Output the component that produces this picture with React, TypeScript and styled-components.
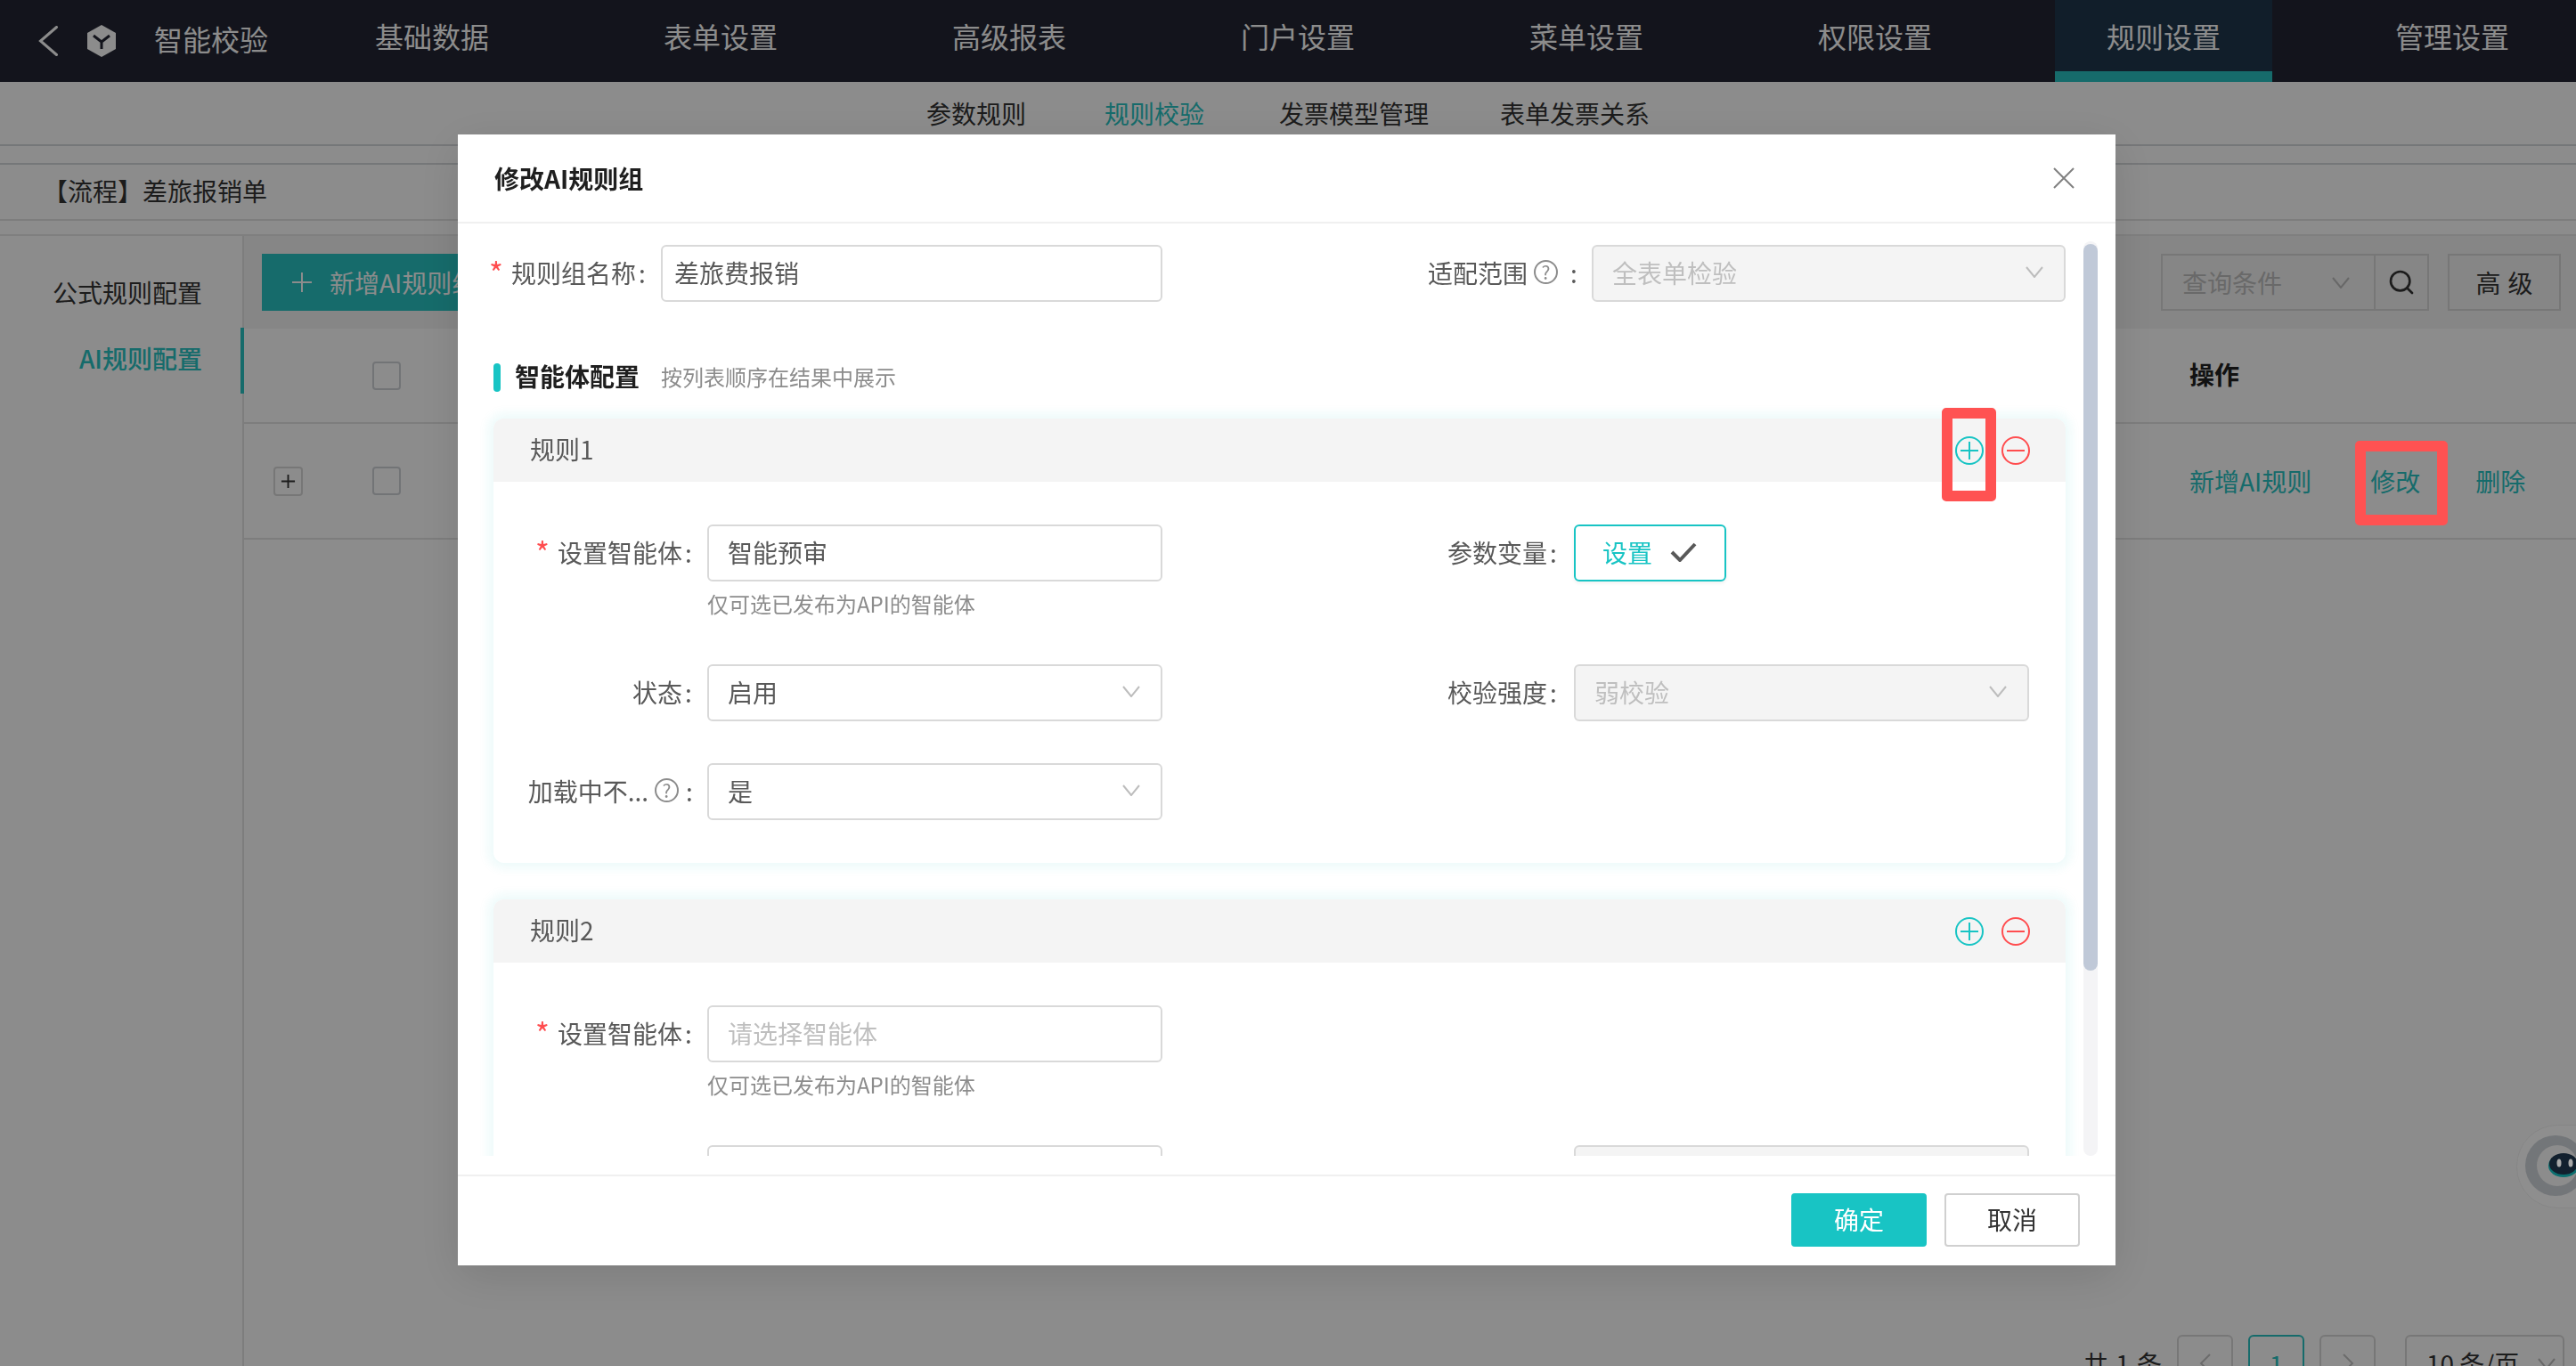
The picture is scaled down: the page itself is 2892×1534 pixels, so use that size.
import { Search } from "lucide-react";
import styled, { createGlobalStyle } from "styled-components";

const GlobalStyle = createGlobalStyle`
  * {
    box-sizing: border-box;
  }

  body {
    margin: 0;
    background: #fff;
    font-family: "Noto Sans CJK SC", "Noto Sans", sans-serif;
    font-size: 28px;
    color: #595959;
  }
`;

const Page = styled.div`
  width: 2892px;
  height: 1534px;
  overflow: hidden;
  background: #fff;
`;

const TopNav = styled.nav`
  height: 92px;
  display: flex;
  align-items: stretch;
  background: #232633;
  color: #fff;
  font-size: 32px;
`;

const Brand = styled.div`
  width: 363px;
  padding-left: 42px;
  display: flex;
  align-items: center;
`;

const BackIcon = styled.svg`
  width: 24px;
  height: 34px;
  fill: none;
  stroke: #fff;
  stroke-width: 3;
  stroke-linecap: round;
`;

const BrandLogo = styled.svg`
  width: 32px;
  height: 36px;
  margin-left: 32px;
`;

const BrandName = styled.span`
  margin-left: 43px;
  padding-bottom: 7px;
`;

const NavItems = styled.div`
  display: flex;
  gap: 80px;
`;

const NavItem = styled.div<{ $active?: boolean }>`
  width: 244px;
  display: flex;
  align-items: center;
  justify-content: center;
  background: ${props => (props.$active ? "#20384e" : "transparent")};
  border-bottom: 12px solid ${props => (props.$active ? "#28c4c3" : "transparent")};
`;

const SubNav = styled.div`
  height: 72px;
  display: grid;
  grid-template-columns: 200px 196px 248px 168px;
  justify-content: center;
  align-items: center;
  border-bottom: 2px solid #d6d9dc;
  color: #333;
`;

const SubNavItem = styled.span<{ $active?: boolean }>`
  color: ${props => (props.$active ? "#28c4c3" : "#333")};
`;

const Breadcrumb = styled.div`
  height: 65px;
  margin-top: 19px;
  padding: 0 0 3px 48px;
  display: flex;
  align-items: center;
  border-top: 2px solid #d6d9dc;
  border-bottom: 2px solid #e4e4e4;
  color: #333;
`;

const Main = styled.div`
  height: 1271px;
  margin-top: 15px;
  display: flex;
  border-top: 2px solid #e8e8e8;
`;

const Sidebar = styled.aside`
  width: 274px;
  flex-shrink: 0;
  padding-top: 29px;
  border-right: 2px solid #e4e4e4;
`;

const SideItem = styled.div<{ $active?: boolean }>`
  height: 74px;
  margin-right: ${props => (props.$active ? "-2px" : "0")};
  padding: 0 ${props => (props.$active ? "43px" : "41px")} 7px 0;
  display: flex;
  align-items: center;
  justify-content: flex-end;
  color: ${props => (props.$active ? "#28c4c3" : "#333")};
  font-weight: ${props => (props.$active ? 500 : 400)};
  border-right: 4px solid ${props => (props.$active ? "#28c4c3" : "transparent")};
`;

const Content = styled.section`
  flex: 1;
  min-width: 0;
`;

const Toolbar = styled.div`
  height: 104px;
  padding: 20px 17px 20px 20px;
  display: flex;
  justify-content: space-between;
  background: #f4f4f4;
`;

const AddButton = styled.button`
  width: 290px;
  height: 64px;
  padding-left: 34px;
  display: flex;
  align-items: center;
  gap: 20px;
  border: none;
  background: #28c4c3;
  color: #fff;
  font: inherit;
`;

const Filters = styled.div`
  display: flex;
  gap: 21px;
`;

const QueryGroup = styled.div`
  display: flex;
`;

const QuerySelect = styled.div`
  width: 241px;
  padding: 0 27px 0 22px;
  display: flex;
  align-items: center;
  justify-content: space-between;
  border: 2px solid #d9d9d9;
  color: #bfbfbf;
`;

const SearchButton = styled.div`
  width: 62px;
  margin-left: -2px;
  display: flex;
  align-items: center;
  justify-content: center;
  border: 2px solid #d9d9d9;
  color: #333;
`;

const AdvancedButton = styled.div`
  width: 127px;
  display: flex;
  align-items: center;
  justify-content: center;
  gap: 8px;
  border: 2px solid #d9d9d9;
  color: #333;
`;

const TableRow = styled.div<{ $head?: boolean }>`
  height: ${props => (props.$head ? "107px" : "130px")};
  display: grid;
  grid-template-columns: 144px 1fr 434px;
  align-items: center;
  border-bottom: 2px solid #e4e4e4;
`;

const ExpandCell = styled.div`
  padding-left: 33px;
`;

const ExpandBox = styled.div`
  width: 33px;
  height: 33px;
  display: flex;
  align-items: center;
  justify-content: center;
  border: 2px solid #d9d9d9;
  border-radius: 4px;
  color: #333;
`;

const Checkbox = styled.div`
  width: 32px;
  height: 32px;
  border: 2px solid #cfd3d8;
  border-radius: 4px;
  background: #fff;
`;

const ActionHead = styled.div`
  padding-bottom: 3px;
  color: #222;
  font-weight: 700;
`;

const Actions = styled.div`
  display: flex;
  gap: 66px;
  color: #28c4c3;

  span:last-child {
    margin-left: -4px;
  }
`;

const Pagination = styled.div`
  height: 64px;
  margin-top: 893px;
  padding-right: 13px;
  display: flex;
  justify-content: flex-end;
  align-items: center;
  gap: 17px;
  color: #333;
`;

const Total = styled.span`
  word-spacing: 2px;
`;

const PageBox = styled.div<{ $active?: boolean }>`
  width: 63px;
  height: 64px;
  display: flex;
  align-items: center;
  justify-content: center;
  border: 2px solid ${props => (props.$active ? "#28c4c3" : "#d9d9d9")};
  border-radius: 6px;
  color: ${props => (props.$active ? "#28c4c3" : "#c4c4c4")};
`;

const PageArrow = styled.svg`
  width: 14px;
  height: 22px;
  fill: none;
  stroke: currentColor;
  stroke-width: 2;
`;

const PageSize = styled.div`
  width: 179px;
  height: 64px;
  margin-left: 16px;
  padding: 0 8px 0 22px;
  display: flex;
  align-items: center;
  justify-content: space-between;
  border: 2px solid #d9d9d9;
  border-radius: 6px;
`;

const Mask = styled.div`
  position: fixed;
  inset: 0;
  background: rgba(0, 0, 0, 0.45);
`;

const Modal = styled.div`
  position: fixed;
  left: 514px;
  top: 151px;
  width: 1861px;
  height: 1270px;
  display: flex;
  flex-direction: column;
  background: #fff;
  box-shadow: 0 12px 48px rgba(0, 0, 0, 0.12);
`;

const ModalHeader = styled.header`
  height: 100px;
  padding: 0 46px 0 41px;
  display: flex;
  align-items: center;
  justify-content: space-between;
  flex-shrink: 0;
  border-bottom: 2px solid #f0f0f0;
  color: #1f1f1f;
  font-weight: 700;
`;

const ModalBody = styled.div`
  flex: 1;
  min-height: 0;
  padding-bottom: 21px;
  display: flex;
`;

const ScrollArea = styled.div`
  flex: 1;
  min-width: 0;
  padding: 24px 20px 0 40px;
  overflow: hidden;
`;

const ScrollTrack = styled.div`
  width: 16px;
  margin: 20px 20px 0 0;
  padding-top: 3px;
  border-radius: 8px;
  background: #f4f4f6;
`;

const ScrollThumb = styled.div`
  height: 816px;
  border-radius: 8px;
  background: #c0c9d8;
`;

const TopForm = styled.div`
  display: flex;
  justify-content: space-between;
`;

const Field = styled.div`
  display: flex;
  align-items: flex-start;
`;

const Label = styled.label<{ $width: number; $gap: number }>`
  width: ${props => props.$width}px;
  height: 64px;
  padding: 0 ${props => props.$gap}px 3px 0;
  display: flex;
  align-items: center;
  justify-content: flex-end;
  flex-shrink: 0;
  white-space: nowrap;
`;

const Required = styled.span`
  margin-right: 9px;
  color: #ff4d4f;
  font-size: 34px;
  line-height: 1;
`;

const Colon = styled.span`
  margin-left: 3px;
  width: 5px;
`;

const HelpIcon = styled.span<{ $after: number }>`
  width: 27px;
  height: 27px;
  margin-left: 7px;
  margin-right: ${props => props.$after}px;
  display: inline-flex;
  align-items: center;
  justify-content: center;
  flex-shrink: 0;
  border: 2px solid #8c8c8c;
  border-radius: 50%;
  color: #8c8c8c;
  font-size: 21px;
  line-height: 1;
`;

const TextBox = styled.div<{ $width: number; $indent: number; $placeholder?: boolean }>`
  width: ${props => props.$width}px;
  height: 64px;
  padding: 0 0 3px ${props => props.$indent}px;
  display: flex;
  align-items: center;
  border: 2px solid #d9d9d9;
  border-radius: 6px;
  background: #fff;
  color: ${props => (props.$placeholder ? "#bfbfbf" : "#595959")};
`;

const SelectBox = styled.div<{ $width: number; $disabled?: boolean }>`
  width: ${props => props.$width}px;
  height: 64px;
  padding: 0 23px 3px 21px;
  display: flex;
  align-items: center;
  justify-content: space-between;
  border: 2px solid #d9d9d9;
  border-radius: 6px;
  background: ${props => (props.$disabled ? "#f4f4f4" : "#fff")};
  color: ${props => (props.$disabled ? "#bfbfbf" : "#595959")};
`;

const SelectChevron = styled.svg`
  width: 20px;
  height: 13px;
  flex-shrink: 0;
  fill: none;
  stroke: #bdbdbd;
  stroke-width: 2;
`;

const SectionTitle = styled.div`
  height: 32px;
  margin-top: 69px;
  display: flex;
  align-items: center;
`;

const SectionBar = styled.span`
  width: 8px;
  height: 32px;
  margin-right: 16px;
  border-radius: 4px;
  background: #18c4c4;
`;

const SectionName = styled.span`
  padding-bottom: 4px;
  color: #1f1f1f;
  font-weight: 700;
`;

const SectionHint = styled.span`
  margin-left: 24px;
  padding-bottom: 4px;
  color: #8c8c8c;
  font-size: 24px;
`;

const RuleCard = styled.div`
  margin-top: 30px;
  border-radius: 12px;
  background: #fff;
  box-shadow: 0 0 12px 6px rgba(24, 196, 196, 0.08);

  & + & {
    margin-top: 41px;
  }
`;

const RuleHeader = styled.div`
  height: 71px;
  padding: 0 40px 0 41px;
  display: flex;
  align-items: center;
  justify-content: space-between;
  border-radius: 12px 12px 0 0;
  background: #f4f4f4;
`;

const RuleTitle = styled.span`
  padding-bottom: 4px;
`;

const RuleActions = styled.div`
  display: flex;
  gap: 20px;
`;

const RoundIcon = styled.svg`
  width: 32px;
  height: 32px;
  display: block;
  fill: none;
  stroke: currentColor;
  stroke-width: 2;
`;

const AddIcon = styled(RoundIcon)`
  color: #18c4c4;
`;

const RemoveIcon = styled(RoundIcon)`
  color: #ff4d4f;
`;

const RuleBody = styled.div`
  padding: 48px 41px;
  display: grid;
  grid-template-columns: 710px 710px;
  column-gap: 263px;
  row-gap: 47px;
`;

const ControlColumn = styled.div`
  display: flex;
  flex-direction: column;
`;

const ControlHint = styled.div`
  height: 46px;
  color: #8c8c8c;
  font-size: 24px;
  line-height: 50px;
`;

const SettingButton = styled.div`
  width: 171px;
  height: 64px;
  padding: 0 0 3px 30px;
  display: flex;
  align-items: center;
  gap: 20px;
  border: 2px solid #18c4c4;
  border-radius: 6px;
  color: #18c4c4;
  box-shadow: 0 2px 4px rgba(0, 0, 0, 0.06);
`;

const CheckIcon = styled.svg`
  width: 30px;
  height: 22px;
  fill: none;
  stroke: #595959;
  stroke-width: 4;
`;

const CloseIcon = styled.svg`
  width: 24px;
  height: 24px;
  fill: none;
  stroke: #808080;
  stroke-width: 2;
`;

const ModalFooter = styled.footer`
  height: 102px;
  padding: 19px 40px 0 0;
  display: flex;
  justify-content: flex-end;
  align-items: flex-start;
  gap: 20px;
  flex-shrink: 0;
  border-top: 2px solid #f0f0f0;
`;

const FooterButton = styled.button<{ $primary?: boolean }>`
  width: 152px;
  height: 60px;
  padding: 0 0 3px;
  border: 2px solid ${props => (props.$primary ? "#18c4c4" : "#d0d0d0")};
  border-radius: 4px;
  background: ${props => (props.$primary ? "#18c4c4" : "#fff")};
  color: ${props => (props.$primary ? "#fff" : "#333")};
  font: inherit;
`;

const Annotation = styled.div<{ $x: number; $y: number; $w: number; $h: number }>`
  position: fixed;
  left: ${props => props.$x}px;
  top: ${props => props.$y}px;
  width: ${props => props.$w}px;
  height: ${props => props.$h}px;
  border: 12px solid #ff5252;
  border-radius: 5px;
`;

const RobotWidget = styled.svg`
  position: fixed;
  right: 0;
  top: 1263px;
  width: 67px;
  height: 94px;
`;

const Chevron = () => (
  <SelectChevron viewBox="0 0 20 13">
    <path d="M1 1l9 11 9-11" />
  </SelectChevron>
);

const AddRound = () => (
  <AddIcon viewBox="0 0 32 32">
    <circle cx="16" cy="16" r="15" />
    <path d="M16 6v20M6 16h20" />
  </AddIcon>
);

const RemoveRound = () => (
  <RemoveIcon viewBox="0 0 32 32">
    <circle cx="16" cy="16" r="15" />
    <path d="M6 16h20" />
  </RemoveIcon>
);

const NAV_ITEMS = ["基础数据", "表单设置", "高级报表", "门户设置", "菜单设置", "权限设置", "规则设置", "管理设置"];
const SUB_NAV_ITEMS = ["参数规则", "规则校验", "发票模型管理", "表单发票关系"];

function AgentField({ placeholder, value }: { placeholder?: string; value?: string }) {
  return (
    <Field>
      <Label $width={199} $gap={20}>
        <Required>*</Required>设置智能体<Colon>:</Colon>
      </Label>
      <ControlColumn>
        <TextBox $width={511} $indent={21} $placeholder={!value}>
          {value || placeholder}
        </TextBox>
        <ControlHint>仅可选已发布为API的智能体</ControlHint>
      </ControlColumn>
    </Field>
  );
}

function SelectField({ label, value, disabled, gap }: { label: string; value: string; disabled?: boolean; gap: number }) {
  return (
    <Field>
      <Label $width={199} $gap={gap}>
        {label}
        <Colon>:</Colon>
      </Label>
      <SelectBox $width={511} $disabled={disabled}>
        {value}
        <Chevron />
      </SelectBox>
    </Field>
  );
}

function RuleHeading({ title }: { title: string }) {
  return (
    <RuleHeader>
      <RuleTitle>{title}</RuleTitle>
      <RuleActions>
        <AddRound />
        <RemoveRound />
      </RuleActions>
    </RuleHeader>
  );
}

export default function App() {
  return (
    <Page>
      <GlobalStyle />
      <TopNav>
        <Brand>
          <BackIcon viewBox="0 0 24 34">
            <path d="M21.5 1.5L3.5 17l18 15.5" />
          </BackIcon>
          <BrandLogo viewBox="0 0 32 36">
            <path d="M16 0l16 9v18l-16 9-16-9V9z" fill="#fff" />
            <path d="M7 12l9 7 9-7M16 19v8" fill="none" stroke="#232633" strokeWidth="3" />
          </BrandLogo>
          <BrandName>智能校验</BrandName>
        </Brand>
        <NavItems>
          {NAV_ITEMS.map(item => (
            <NavItem key={item} $active={item === "规则设置"}>
              {item}
            </NavItem>
          ))}
        </NavItems>
      </TopNav>
      <SubNav>
        {SUB_NAV_ITEMS.map(item => (
          <SubNavItem key={item} $active={item === "规则校验"}>
            {item}
          </SubNavItem>
        ))}
      </SubNav>
      <Breadcrumb>【流程】差旅报销单</Breadcrumb>
      <Main>
        <Sidebar>
          <SideItem>公式规则配置</SideItem>
          <SideItem $active>AI规则配置</SideItem>
        </Sidebar>
        <Content>
          <Toolbar>
            <AddButton>
              <svg width="22" height="22" viewBox="0 0 22 22" stroke="#fff" strokeWidth="2">
                <path d="M11 0v22M0 11h22" />
              </svg>
              新增AI规则组
            </AddButton>
            <Filters>
              <QueryGroup>
                <QuerySelect>
                  查询条件
                  <Chevron />
                </QuerySelect>
                <SearchButton>
                  <Search size={32} strokeWidth={2} />
                </SearchButton>
              </QueryGroup>
              <AdvancedButton>
                <span>高</span>
                <span>级</span>
              </AdvancedButton>
            </Filters>
          </Toolbar>
          <TableRow $head>
            <div />
            <Checkbox />
            <ActionHead>操作</ActionHead>
          </TableRow>
          <TableRow>
            <ExpandCell>
              <ExpandBox>
                <svg width="17" height="17" viewBox="0 0 18 18" stroke="#333" strokeWidth="2">
                  <path d="M9 1v16M1 9h16" />
                </svg>
              </ExpandBox>
            </ExpandCell>
            <Checkbox />
            <Actions>
              <span>新增AI规则</span>
              <span>修改</span>
              <span>删除</span>
            </Actions>
          </TableRow>
          <Pagination>
            <Total>共 1 条</Total>
            <PageBox>
              <PageArrow viewBox="0 0 14 22">
                <path d="M12 1L2 11l10 10" />
              </PageArrow>
            </PageBox>
            <PageBox $active>1</PageBox>
            <PageBox>
              <PageArrow viewBox="0 0 14 22">
                <path d="M2 1l10 10L2 21" />
              </PageArrow>
            </PageBox>
            <PageSize>
              10 条/页
              <Chevron />
            </PageSize>
          </Pagination>
        </Content>
      </Main>

      <Mask />
      <RobotWidget viewBox="0 0 67 94">
        <rect x="0.5" y="0.5" width="120" height="93" rx="46" fill="#8e8e8e" stroke="#868686" />
        <circle cx="44" cy="46" r="34" fill="#737679" />
        <circle cx="46" cy="46" r="23" fill="#8c8c8c" />
        <ellipse cx="53" cy="46" rx="17" ry="13" fill="#0c6f6f" />
        <ellipse cx="53" cy="44" rx="16" ry="12" fill="#12202e" />
        <ellipse cx="48" cy="43" rx="2.5" ry="4.5" fill="#a9a9a9" />
        <ellipse cx="61" cy="43" rx="2.5" ry="4.5" fill="#a9a9a9" />
      </RobotWidget>

      <Modal>
        <ModalHeader>
          修改AI规则组
          <CloseIcon viewBox="0 0 24 24">
            <path d="M1 1l22 22M23 1L1 23" />
          </CloseIcon>
        </ModalHeader>
        <ModalBody>
          <ScrollArea>
            <TopForm>
              <Field>
                <Label $width={188} $gap={20}>
                  <Required>*</Required>规则组名称<Colon>:</Colon>
                </Label>
                <TextBox $width={563} $indent={13}>
                  差旅费报销
                </TextBox>
              </Field>
              <Field>
                <Label $width={200} $gap={19}>
                  适配范围
                  <HelpIcon $after={11}>?</HelpIcon>
                  <Colon>:</Colon>
                </Label>
                <SelectBox $width={532} $disabled>
                  全表单检验
                  <Chevron />
                </SelectBox>
              </Field>
            </TopForm>
            <SectionTitle>
              <SectionBar />
              <SectionName>智能体配置</SectionName>
              <SectionHint>按列表顺序在结果中展示</SectionHint>
            </SectionTitle>
            <RuleCard>
              <RuleHeading title="规则1" />
              <RuleBody>
                <AgentField value="智能预审" />
                <Field>
                  <Label $width={199} $gap={22}>
                    参数变量<Colon>:</Colon>
                  </Label>
                  <SettingButton>
                    设置
                    <CheckIcon viewBox="0 0 30 22">
                      <path d="M2 11l9 9L28 2" />
                    </CheckIcon>
                  </SettingButton>
                </Field>
                <SelectField label="状态" value="启用" gap={20} />
                <SelectField label="校验强度" value="弱校验" disabled gap={22} />
                <Field>
                  <Label $width={199} $gap={19}>
                    加载中不...
                    <HelpIcon $after={5}>?</HelpIcon>
                    <Colon>:</Colon>
                  </Label>
                  <SelectBox $width={511}>
                    是
                    <Chevron />
                  </SelectBox>
                </Field>
              </RuleBody>
            </RuleCard>
            <RuleCard>
              <RuleHeading title="规则2" />
              <RuleBody>
                <AgentField placeholder="请选择智能体" />
                <div />
                <SelectField label="状态" value="启用" gap={20} />
                <SelectField label="校验强度" value="弱校验" disabled gap={22} />
              </RuleBody>
            </RuleCard>
          </ScrollArea>
          <ScrollTrack>
            <ScrollThumb />
          </ScrollTrack>
        </ModalBody>
        <ModalFooter>
          <FooterButton $primary>确定</FooterButton>
          <FooterButton>取消</FooterButton>
        </ModalFooter>
      </Modal>

      <Annotation $x={2180} $y={458} $w={61} $h={105} />
      <Annotation $x={2644} $y={495} $w={104} $h={95} />
    </Page>
  );
}
